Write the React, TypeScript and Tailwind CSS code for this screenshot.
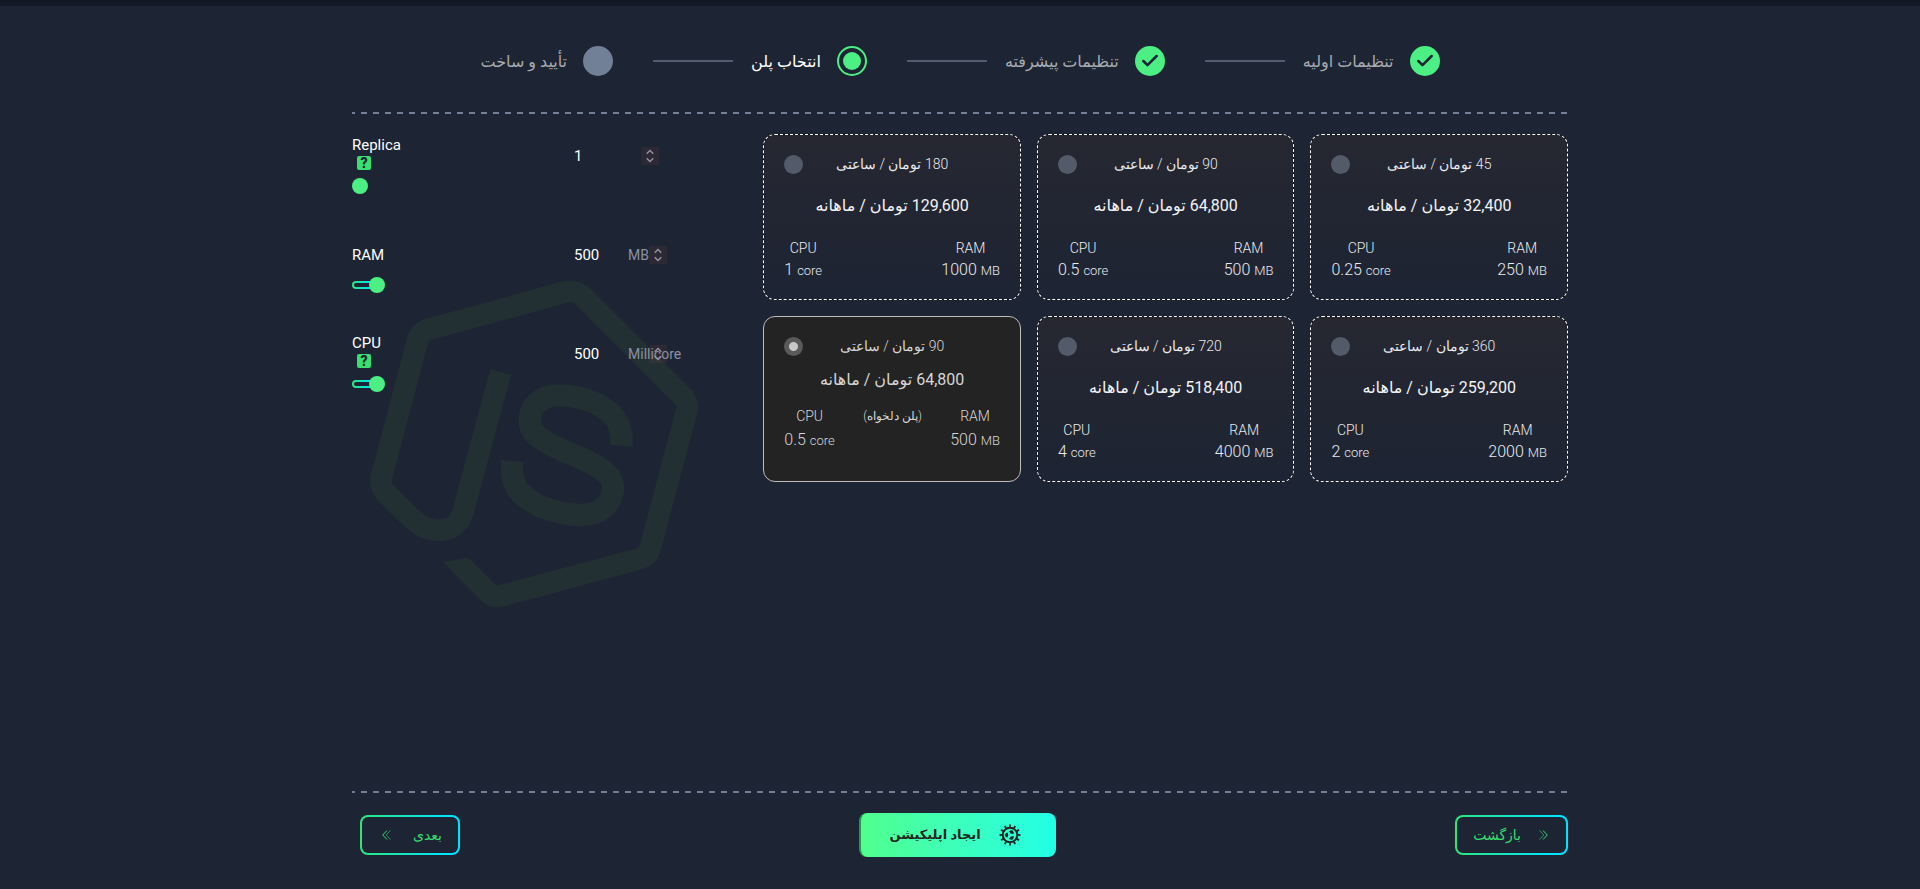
import React from 'react';
import { clsx } from 'clsx';
import { Check } from 'lucide-react';

type StepState = 'done' | 'active' | 'todo';

interface Plan {
  hourly: string;
  monthly: string;
  cpu: string;
  ram: string;
  custom?: boolean;
}

const steps: { label: string; state: StepState }[] = [
  { label: 'تنظیمات اولیه', state: 'done' },
  { label: 'تنظیمات پیشرفته', state: 'done' },
  { label: 'انتخاب پلن', state: 'active' },
  { label: 'تأیید و ساخت', state: 'todo' },
];

const plans: Plan[] = [
  { hourly: '45', monthly: '32,400', cpu: '0.25', ram: '250' },
  { hourly: '90', monthly: '64,800', cpu: '0.5', ram: '500' },
  { hourly: '180', monthly: '129,600', cpu: '1', ram: '1000' },
  { hourly: '360', monthly: '259,200', cpu: '2', ram: '2000' },
  { hourly: '720', monthly: '518,400', cpu: '4', ram: '4000' },
  { hourly: '90', monthly: '64,800', cpu: '0.5', ram: '500', custom: true },
];

function StepIcon({ state }: { state: StepState }) {
  if (state === 'done') {
    return (
      <span className="flex size-[30px] items-center justify-center rounded-full bg-[#4cef83] text-[#1d2433]">
        <Check size={20} strokeWidth={3} />
      </span>
    );
  }
  if (state === 'active') {
    return (
      <span className="flex size-[30px] items-center justify-center rounded-full border-2 border-[#4cef83]">
        <span className="size-[18px] rounded-full bg-[#4cef83]" />
      </span>
    );
  }
  return <span className="size-[30px] rounded-full bg-[#718096]" />;
}

function Stepper() {
  return (
    <ol className="flex items-center justify-center pt-10 pb-9">
      {steps.map((step, i) => (
        <li key={step.label} className="flex items-center">
          {i > 0 && <span className="mr-[18px] ml-10 h-0.5 w-20 bg-[#535b6e]" />}
          <StepIcon state={step.state} />
          <span className={clsx('mr-4 pt-0.5 text-base', step.state === 'active' ? 'text-white' : 'text-[#a9abae]')}>
            {step.label}
          </span>
        </li>
      ))}
    </ol>
  );
}

function DashedLine() {
  return (
    <div className="h-0.5 bg-[repeating-linear-gradient(to_right,#718096_0,#718096_3px,transparent_3px,transparent_9px,#718096_9px,#718096_12px)]" />
  );
}

function PlanCard({ plan, checked, onSelect }: { plan: Plan; checked: boolean; onSelect: () => void }) {
  return (
    <label
      className={clsx(
        'block cursor-pointer rounded-xl border px-5 pt-5 pb-[17px]',
        checked
          ? 'border-[#bdbdbd] bg-[#232323] text-[#d6d6d6]'
          : 'border-dashed border-white text-[#e8eaee] [background:linear-gradient(#262731,#1d2433)_padding-box,#0c0e14_border-box]'
      )}
    >
      <div className="grid grid-cols-[19px_1fr_19px] items-center text-center">
        <span />
        <span className="text-sm leading-[19px] font-light">{plan.hourly} تومان / ساعتی</span>
        <input
          type="radio"
          name="plan"
          checked={checked}
          onChange={onSelect}
          className="size-[19px] appearance-none rounded-full bg-[#535b6b] checked:bg-[radial-gradient(circle,#c8c8c8_4px,#5a5a5a_5px)]"
        />
      </div>
      <p className={clsx('text-center text-base', plan.custom ? 'mt-3 mb-[14px]' : 'my-5 text-[#f3f4f6]')}>
        {plan.monthly} تومان / ماهانه
      </p>
      <div className="flex justify-between text-center font-light">
        <div>
          <p className="text-sm">RAM</p>
          <p dir="ltr" className={clsx('text-base', plan.custom && 'mt-0.5')}>
            {plan.ram} <span className="text-[13px]">MB</span>
          </p>
        </div>
        {plan.custom && <p className="text-xs leading-5">(پلن دلخواه)</p>}
        <div>
          <p className="text-sm">CPU</p>
          <p dir="ltr" className={clsx('text-base', plan.custom && 'mt-0.5')}>
            {plan.cpu} <span className="text-[13px]">core</span>
          </p>
        </div>
      </div>
    </label>
  );
}

interface ResourceProps {
  id: string;
  label: string;
  unit?: string;
  help?: boolean;
  step: number;
  value: number;
  onChange: (value: number) => void;
}

function Resource({ id, label, unit, help, step, value, onChange }: ResourceProps) {
  return (
    <div>
      <div className="flex h-11 items-center">
        <div className="w-[222px]">
          <label htmlFor={id} className="block text-[15px] leading-[22px]">{label}</label>
          {help && (
            <button
              type="button"
              aria-label={`${label} help`}
              className="mb-2 ml-[5px] flex size-[14px] items-center justify-center rounded-xs bg-[#38e070] text-sm leading-[14px] font-black text-[#1d2433]"
            >
              ?
            </button>
          )}
        </div>
        <div className="relative flex items-center text-[15px] leading-[22px]">
          <input
            id={id}
            type="text"
            value={value}
            onChange={(e) => onChange(Number(e.target.value) || 0)}
            className="w-[54px] bg-transparent outline-none"
          />
          <span className="text-sm text-[#8b91a3]">{unit}</span>
          <span
            className={clsx(
              'absolute top-0.5 flex h-[18px] w-[18px] flex-col items-center justify-center gap-1 bg-[#e0663c]/8 text-[#9295a3]',
              unit ? 'left-[75px]' : 'left-[67px]'
            )}
          >
            <button type="button" aria-label={`${label} +`} onClick={() => onChange(value + step)}>
              <svg viewBox="0 0 8 4" fill="none" stroke="currentColor" strokeWidth="1.4" className="block h-1 w-2 overflow-visible">
                <path d="M.7 3.8L4 .6L7.3 3.8" />
              </svg>
            </button>
            <button type="button" aria-label={`${label} -`} onClick={() => onChange(Math.max(step, value - step))}>
              <svg viewBox="0 0 8 4" fill="none" stroke="currentColor" strokeWidth="1.4" className="block h-1 w-2 overflow-visible">
                <path d="M.7 .2L4 3.4L7.3 .2" />
              </svg>
            </button>
          </span>
        </div>
      </div>
      <div className={clsx('relative h-4', unit ? 'w-[33px]' : 'w-4')}>
        {unit && (
          <span className="absolute top-1 left-0 h-2 w-[26px] rounded-full border-2 border-transparent [background:linear-gradient(#1d2433,#1d2433)_padding-box,linear-gradient(to_right,#2ee57c,#00e1ff_70%)_border-box]" />
        )}
        <input
          type="range"
          aria-label={label}
          min={0}
          max={unit ? 500 : 1}
          value={value}
          onChange={(e) => onChange(Number(e.target.value))}
          className="relative block h-4 w-full appearance-none bg-transparent [&::-webkit-slider-thumb]:size-4 [&::-webkit-slider-thumb]:appearance-none [&::-webkit-slider-thumb]:rounded-full [&::-webkit-slider-thumb]:bg-[#4cef83]"
        />
      </div>
    </div>
  );
}

function NodeWatermark() {
  return (
    <svg
      viewBox="0 0 1140 1080"
      fill="none"
      stroke="#223034"
      strokeWidth="65"
      className="pointer-events-none absolute top-[126px] -left-3 w-[380px]"
    >
      <path d="M482 336L370 752C357 800 325 811 297 811C262 811 232 792 217 777L137 698Q119 680 124 652L233 241Q241 216 263 209L676 96Q704 90 726 107L1029 411Q1046 430 1041 449L930 866Q923 889 900 896L482 1008Q461 1013 443 996L368 921" />
      <path d="M310 906L376 893Q382 893 386 897L393 902L350 948Z" fill="#223034" stroke="none" />
      <path
        strokeWidth="67"
        d="M844 557C850 490 820 455 765 429C730 413 690 406 658 406C600 406 569 440 569 483C569 520 600 537 640 558C690 583 735 595 779 624C805 641 819 660 819 686C816 735 775 765 722 765C680 765 620 752 576 725C530 698 510 665 517 602"
      />
    </svg>
  );
}

function GearIcon() {
  return (
    <svg viewBox="0 0 24 24" fill="none" stroke="currentColor" className="size-[22px]">
      <circle cx="12" cy="12" r="7.9" strokeWidth="2.2" />
      {Array.from({ length: 12 }, (_, i) => (
        <path key={i} d="M12 .6V4" strokeWidth="2" transform={`rotate(${i * 30} 12 12)`} />
      ))}
      {[0, 120, 240].map((angle) => (
        <path key={angle} d="M6.2 12Q7.2 9.2 9.2 9.2Q11.2 12 9.2 14.8Q7.2 14.8 6.2 12Z" fill="currentColor" stroke="none" transform={`rotate(${angle} 12 12)`} />
      ))}
    </svg>
  );
}

function DoubleChevron({ flip }: { flip?: boolean }) {
  return (
    <svg viewBox="0 0 9 10" fill="none" stroke="currentColor" className={clsx('mx-0.5 h-2.5 w-[9px]', flip && 'rotate-180')}>
      <path d="M.5 .5L4.8 5L.5 9.5" opacity="0.6" />
      <path d="M4 .5L8.3 5L4 9.5" />
    </svg>
  );
}

const outlineButton =
  'flex h-10 items-center rounded-lg border-2 border-transparent text-sm font-medium text-[#38dc70] [background:linear-gradient(#1d2433,#1d2433)_padding-box,linear-gradient(to_right,#2ee57c,#00e5ff_85%)_border-box]';

export default function App() {
  const [selected, setSelected] = React.useState(5);
  const [replica, setReplica] = React.useState(1);
  const [ram, setRam] = React.useState(500);
  const [cpu, setCpu] = React.useState(500);

  return (
    <div dir="rtl" className="flex min-h-screen flex-col border-t-6 border-[#141a25] bg-[#1d2433] font-['Roboto','DejaVu_Sans',sans-serif] text-white">
      <div className="mx-auto flex w-full max-w-[1216px] flex-1 flex-col">
        <Stepper />
        <DashedLine />

        <main className="flex flex-1 gap-1.5 pt-5">
          <div role="radiogroup" className="grid flex-1 grid-cols-3 content-start gap-4">
            {plans.map((plan, i) => (
              <PlanCard key={i} plan={plan} checked={selected === i} onSelect={() => setSelected(i)} />
            ))}
          </div>

          <div dir="ltr" className="relative w-1/3">
            <NodeWatermark />
            <div className="relative flex flex-col gap-[39px]">
              <Resource id="replica" label="Replica" help step={1} value={replica} onChange={setReplica} />
              <Resource id="ram" label="RAM" unit="MB" step={50} value={ram} onChange={setRam} />
              <Resource id="cpu" label="CPU" unit="Millicore" help step={50} value={cpu} onChange={setCpu} />
            </div>
          </div>
        </main>

        <DashedLine />
        <footer className="flex items-center justify-between pt-5 pb-8 pl-2">
          <button type="button" className={clsx(outlineButton, 'gap-4 pr-4 pl-4')}>
            <DoubleChevron />
            بازگشت
          </button>
          <button
            type="button"
            className="flex h-11 items-center gap-[18px] rounded-lg border-l-2 border-[#1f9a4f] bg-linear-to-r from-[#50ff8c] to-[#20ffe6] pr-[35px] pl-7 text-[13px] font-bold text-[#1e2622]"
          >
            <GearIcon />
            ایجاد اپلیکیشن
          </button>
          <button type="button" className={clsx(outlineButton, 'gap-5 pr-4 pl-[18px]')}>
            بعدی
            <DoubleChevron flip />
          </button>
        </footer>
      </div>
    </div>
  );
}
